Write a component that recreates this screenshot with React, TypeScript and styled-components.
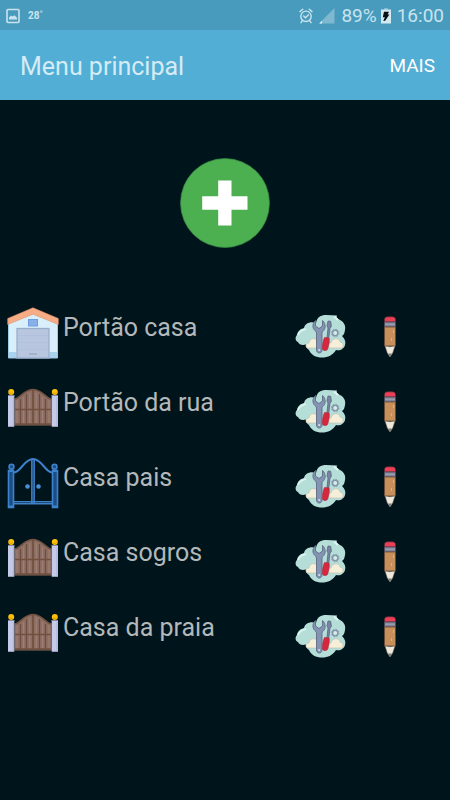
import React from 'react';
import styled, { createGlobalStyle } from 'styled-components';

const GlobalStyle = createGlobalStyle`
  * { box-sizing: border-box; }
  body {
    margin: 0;
    background: #00141b;
    font-family: Roboto, "Liberation Sans", sans-serif;
  }
  button { border: 0; padding: 0; background: none; font: inherit; cursor: pointer; }
  svg { display: block; }
`;

const Screen = styled.div`
  min-height: 100vh;
  background: #00141b;
`;

const StatusBar = styled.div`
  display: flex;
  align-items: center;
  justify-content: space-between;
  height: 30px;
  padding: 1px 6px 0;
  background: #489bbc;
  color: #c9e4ef;
`;

const StatusGroup = styled.div<{ $gap: number }>`
  display: flex;
  align-items: center;
  gap: ${(p) => p.$gap}px;
`;

const Temperature = styled.span`
  font-size: 10px;
  font-weight: 700;
  line-height: 30px;
`;

const StatusText = styled.span`
  font-size: 19px;
  line-height: 30px;
`;

const AppBar = styled.header`
  display: flex;
  align-items: center;
  justify-content: space-between;
  height: 70px;
  padding: 0 15px 0 20px;
  background: #52aed4;
`;

const Title = styled.h1`
  margin: 0;
  padding-top: 2px;
  font-size: 25px;
  font-weight: 400;
  color: #d5ebf5;
`;

const MoreButton = styled.button`
  && { font-size: 19px; }
  color: #fff;
`;

const AddArea = styled.div`
  display: flex;
  justify-content: center;
  padding: 58px 0 47px;
`;

const IconButton = styled.button`
  display: block;
`;

const GateList = styled.ul`
  margin: 0;
  padding: 0 53px 0 7px;
  list-style: none;
`;

const GateRow = styled.li`
  display: grid;
  grid-template-columns: 52px 1fr auto;
  align-items: center;
  height: 75px;
`;

const GateName = styled.span`
  padding: 0 0 10px 4px;
  font-size: 25px;
  line-height: 32px;
  color: #b3b8ba;
`;

const Actions = styled.div`
  display: flex;
  align-items: center;
  gap: 36px;
  padding-top: 6px;
`;

const PencilButton = styled(IconButton)`
  padding-top: 2px;
`;

const PictureIcon = () => (
  <svg width="14" height="16" viewBox="0 0 14 16" aria-hidden="true">
    <rect x="1" y="1.5" width="12" height="13" rx="1" fill="none" stroke="#c9e4ef" strokeWidth="1.6" />
    <path d="M3 11.5V9.5l2-2 1.5 1 2-1.3 2.5 2.5v1.8z" fill="#c9e4ef" />
  </svg>
);

const AlarmIcon = () => (
  <svg width="14" height="16" viewBox="0 0 14 16" fill="none" stroke="#c9e4ef" strokeWidth="1.4" strokeLinecap="round" aria-hidden="true">
    <circle cx="7" cy="8.3" r="5.2" />
    <path d="M1 3.6 3.8 1.3M13 3.6l-2.8-2.3M3.3 12.7 2 14.7M10.7 12.7l1.3 2M4.7 8l1.8 1.8 3-3" />
  </svg>
);

const SignalIcon = () => (
  <svg width="16" height="16" viewBox="0 0 16 16" aria-hidden="true">
    <path d="M15.5 0v15.5H0z" fill="#7fb9d0" />
    <path d="M3 12.8v2.7H.3z" fill="#e3f2f8" />
  </svg>
);

const BatteryIcon = () => (
  <svg width="10" height="16" viewBox="0 0 10 16" aria-hidden="true">
    <path d="M3 0h4v1.5h3V15.5H0V1.5h3z" fill="#d3e9f2" />
    <path d="M3 0h4v1.5H3z" fill="#7fb9d0" />
    <path d="M3 3.8h5L6.6 6.6h1.8L4.2 12.8l-1.9.2L3.9 9.2H1.8z" fill="#071014" />
  </svg>
);

const AddIcon = () => (
  <svg width="90" height="90" viewBox="0 0 90 90" aria-hidden="true">
    <circle cx="45" cy="45" r="44.5" fill="#4caf50" stroke="#348846" strokeWidth=".7" />
    <path d="M38.2 22.5h13.3v15.8h16v13.5h-16v15.7H38.2V51.8h-16V38.300h16z" fill="#fff" />
  </svg>
);

const GarageIcon = () => (
  <svg width="52" height="52" viewBox="0 0 52 52" aria-hidden="true">
    <path d="M1.5 14 26 4l24.5 10v37h-49z" fill="#d9effb" />
    <path d="M1.5 45h8v6h-8zM42.5 45h8v6h-8z" fill="#a9d2ec" />
    <path d="M1.5 14v37h49V14" fill="none" stroke="#9ecbe8" />
    <path d="M26 .8 51.3 11.5v6L26 7.2.7 17.5v-6z" fill="#f6ad86" stroke="#dd946e" strokeWidth=".6" />
    <rect x="21.5" y="12.5" width="9" height="6.5" fill="#86b0e6" stroke="#6f9de0" />
    <rect x="10" y="21.5" width="32" height="29.5" fill="#b8c7df" stroke="#9aaecb" strokeWidth="1.3" />
    <path d="M11 28.5h30M11 35.5h30M11 42.5h30" stroke="#afc0da" strokeWidth=".6" />
    <path d="M22 47h8" stroke="#9babc6" strokeWidth="1.5" />
  </svg>
);

const WoodGateIcon = () => (
  <svg width="52" height="40" viewBox="0 0 52 40" aria-hidden="true">
    <path d="M7.5 11C13 10.5 17 1.5 26 1.5S39 10.5 44.5 11v26.5h-37z" fill="#8d6e63" />
    <path d="M13.5 11v25M19.5 6v30M32.5 6v30M38.5 11v25" stroke="#6d4c41" strokeWidth="1.2" />
    <path d="M10 12v24M16.5 9v27M22.7 5v31M29.3 5v31M35.5 9v27M42 12v24" stroke="#9b7f75" strokeWidth="1.2" />
    <path d="M7.5 11C13 10.5 17 1.5 26 1.5S39 10.5 44.5 11M26 1.5v35M7.5 21.5h37M7.5 36.2h37" fill="none" stroke="#71503f" strokeWidth="1.7" />
    <path d="M1 7h6.3v31.8H1zM44.7 7H51v31.8h-6.3z" fill="#c5cae9" />
    <path d="M6.3 9v29M50 9v29" stroke="#aab2d8" />
    <path d="M1 7.5h6.3M44.7 7.5H51" stroke="#8288a5" />
    <circle cx="4.2" cy="4" r="3" fill="#ffc107" />
    <circle cx="47.8" cy="4" r="3" fill="#ffc107" />
    <path d="M2.5 4.5a2 2 0 0 0 3.4 0M46.1 4.5a2 2 0 0 0 3.4 0" fill="none" stroke="#d99c05" />
  </svg>
);

const BlueGateIcon = () => (
  <svg width="52" height="52" viewBox="0 0 52 52" aria-hidden="true">
    <g fill="#1b4e87" stroke="#3f82cc" strokeWidth="1.6">
      <rect x="1.5" y="13.5" width="5" height="37" />
      <rect x="45.5" y="13.5" width="5" height="37" />
      <circle cx="4.5" cy="9.7" r="2.4" />
      <circle cx="47.5" cy="9.7" r="2.4" />
    </g>
    <path d="M1 14h6M1 49.5h6M45 14h6M45 49.5h6" stroke="#3f82cc" strokeWidth="2.2" />
    <path d="M7 15.5C14 15 17 2 26 2s12 13 19 13.5" fill="none" stroke="#3f82cc" strokeWidth="2.2" />
    <path d="M24.9 2.5v44M27.1 2.5v44M7 44.7h38M7 46.8h38" fill="none" stroke="#3f82cc" strokeWidth="1.6" />
    <circle cx="20.5" cy="29.5" r="2.3" fill="#4a8ed6" />
    <circle cx="31.5" cy="29.5" r="2.3" fill="#4a8ed6" />
  </svg>
);

const ToolsIcon = () => (
  <svg width="52" height="44" viewBox="0 0 52 44" aria-hidden="true">
    <path d="M9 14c1-5 7-7 12-5C22 3 26 1 31 1l11 .5c-1 2 1 3 3 4.500 4 2 6 6 5 10-.5 3-1 5-3 6 3 3 4 6 3 9-1 4-5 6-9 5-3 5-8 7.500-14 7.500S16 41 14 36c-2-1-3-3-3-5.500-4 1-7 0-8-2.500-3-1-3-5-1-7 1-4 3-6 7-7z" fill="#b5ded9" />
    <path d="M3 21c1-3 4-5 8-6M39 2.500l4 3.500" stroke="#e0f4f0" strokeWidth="1.8" fill="none" />
    <path d="M12 34c-2-2-1-5 2-5 0-5 7-6 9-1 3 1 3 4 2 6zM34 34c-1-3 0-5 2-5 1-5 8-6 9-1 3 0 4 4 2 6z" fill="#f5efd9" stroke="#c3bda9" strokeWidth=".6" />
    <path d="M20.500 6.500c-2.500 2-3.500 6-1.500 9 1 1.500 2.500 2 2.500 3.500V36c0 4 5.500 4 5.500 0V19c0-1.500 1.700-2 2.400-3.500 1.600-3 .6-7-1.900-9V12L24 14.500 20.500 12z" fill="#8593b2" stroke="#5f6b87" strokeWidth=".9" />
    <circle cx="24.2" cy="36" r="1.1" fill="#d5dce8" />
    <path d="m33 7 2.700.3.700 5-1.400 2-1.500 12-1.800-.2 1.300-12.100-1-2z" fill="#7885a2" stroke="#59647e" strokeWidth=".8" />
    <path d="m29.500 23.500 4.500.5c1 3-.5 8-1.300 11-.7 2-4.700 2-5.200 0-.3-3 .5-8.500 2-11.500z" fill="#d7263d" stroke="#a82639" strokeWidth=".6" />
    <circle cx="40.2" cy="19" r="2.7" fill="#d4ece9" stroke="#8495a9" strokeWidth="1.5" />
    <circle cx="40.2" cy="19" r="3.8" fill="none" stroke="#8495a9" strokeWidth=".9" strokeDasharray="1.5 1.485" />
  </svg>
);

const PencilIcon = () => (
  <svg width="14" height="42" viewBox="0 0 14 42" aria-hidden="true">
    <path d="M1.5 6V3.5C1.5 1.5 3 .8 5 .8h4c2 0 3.5.7 3.5 2.7V6z" fill="#e94057" stroke="#5b2833" strokeWidth=".7" />
    <path d="M1.5 6h11v5h-11z" fill="#82839a" stroke="#474a59" strokeWidth=".8" />
    <path d="M2 8.2h10" stroke="#a6a7b6" />
    <path d="M1.5 11h11v19h-11z" fill="#c78f59" stroke="#684a35" strokeWidth=".8" />
    <path d="M10.5 14v3M8.5 22v3" stroke="#deb078" />
    <path d="m2 30 5 .7 5-.7-2.3 7L7 41l-2.7-4z" fill="#eee8da" stroke="#686259" strokeWidth=".5" />
    <path d="m5 37.5 2 3.5 2-3.5z" fill="#7b7a79" />
  </svg>
);

const gateIcons = { garage: GarageIcon, wood: WoodGateIcon, blue: BlueGateIcon };

const gates: { name: string; icon: keyof typeof gateIcons }[] = [
  { name: 'Portão casa', icon: 'garage' },
  { name: 'Portão da rua', icon: 'wood' },
  { name: 'Casa pais', icon: 'blue' },
  { name: 'Casa sogros', icon: 'wood' },
  { name: 'Casa da praia', icon: 'wood' },
];

export default function App() {
  return (
    <>
      <GlobalStyle />
      <Screen>
        <StatusBar>
          <StatusGroup $gap={8}>
            <PictureIcon />
            <Temperature>28˚</Temperature>
          </StatusGroup>
          <StatusGroup $gap={6}>
            <AlarmIcon />
            <SignalIcon />
            <StatusGroup $gap={4}>
              <StatusText>89%</StatusText>
              <BatteryIcon />
            </StatusGroup>
            <StatusText>16:00</StatusText>
          </StatusGroup>
        </StatusBar>
        <AppBar>
          <Title>Menu principal</Title>
          <MoreButton type="button">MAIS</MoreButton>
        </AppBar>
        <main>
          <AddArea>
            <IconButton type="button" aria-label="Adicionar">
              <AddIcon />
            </IconButton>
          </AddArea>
          <GateList>
            {gates.map(({ name, icon }) => {
              const GateIcon = gateIcons[icon];
              return (
                <GateRow key={name}>
                  <IconButton type="button" aria-label={`Abrir ${name}`}>
                    <GateIcon />
                  </IconButton>
                  <GateName>{name}</GateName>
                  <Actions>
                    <IconButton type="button" aria-label={`Configurar ${name}`}>
                      <ToolsIcon />
                    </IconButton>
                    <PencilButton type="button" aria-label={`Editar ${name}`}>
                      <PencilIcon />
                    </PencilButton>
                  </Actions>
                </GateRow>
              );
            })}
          </GateList>
        </main>
      </Screen>
    </>
  );
}
